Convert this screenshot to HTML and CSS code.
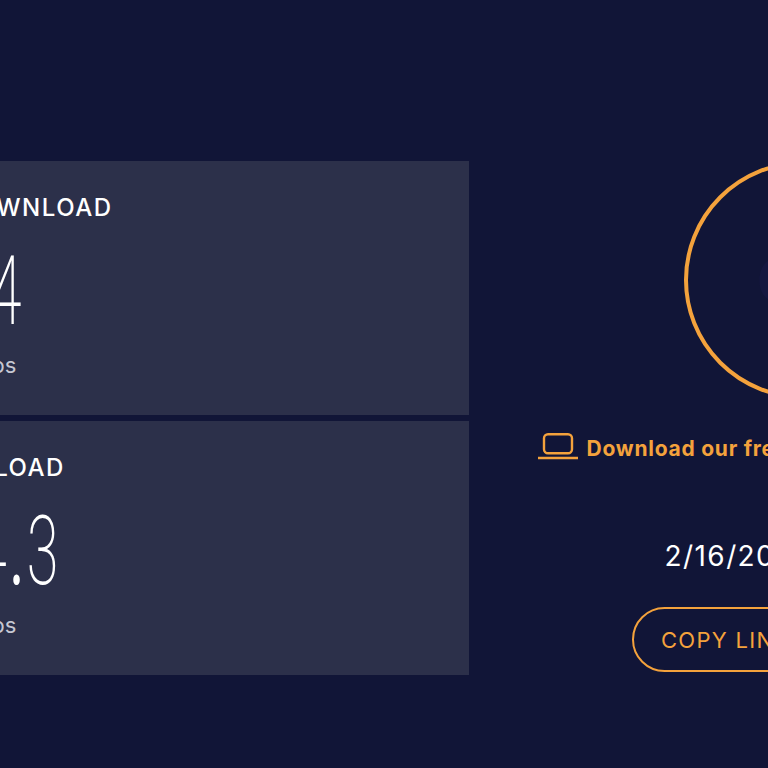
FILE: index.html
```html
<!DOCTYPE html>
<html lang="en">
<head>
<meta charset="utf-8">
<title>Speed test result</title>
<link rel="stylesheet" href="styles.css">
</head>
<body>
<main class="result">
  <section class="stats">
    <article class="card">
      <h2 class="label">DOWNLOAD</h2>
      <div class="value"><span class="digits">94</span></div>
      <div class="unit">Mbps</div>
    </article>
    <article class="card">
      <h2 class="label">UPLOAD</h2>
      <div class="value value-up"><span class="digits">14<span class="dot">.</span>3</span></div>
      <div class="unit">Mbps</div>
    </article>
  </section>
  <section class="side">
    <div class="dial"><span class="dial-text">GO</span></div>
    <a class="promo">
      <svg class="laptop" viewBox="0 0 40 27" aria-hidden="true">
        <rect x="6" y="1.2" width="28" height="19" rx="4"/>
        <path d="M0 25h40"/>
      </svg>
      <span class="promo-text">Download our free desktop and mobile apps</span>
    </a>
    <div class="date">2/16/2021, 9:41 PM</div>
    <button class="copy">COPY LINK TO RESULTS</button>
  </section>
</main>
</body>
</html>
```

FILE: styles.css
```css
html, body {
  margin: 0;
  height: 100%;
  background: #111537;
  overflow: hidden;
}
body {
  font-family: "Inter", "Open Sans", sans-serif;
  color: #fff;
}
.result {
  display: flex;
  width: 1100px;
  margin-left: -60px;
  padding-top: 161px;
}
.stats {
  width: 529px;
  flex: none;
  display: flex;
  flex-direction: column;
  gap: 6px;
}
.card {
  height: 254px;
  background: #2c304a;
  padding: 34px 0 0 18px;
  box-sizing: border-box;
}
.label {
  margin: 0;
  font-size: 24px;
  line-height: 26px;
  font-weight: 500;
  letter-spacing: 1.5px;
  white-space: nowrap;
}
.value {
  margin-top: 30px;
  height: 80px;
  font-family: "Roboto", sans-serif;
  font-weight: 200;
  font-size: 96px;
  line-height: 80px;
}
.value-up {
  margin-left: -17px;
  letter-spacing: 4px;
}
.digits {
  display: inline-block;
  transform: scaleX(0.6);
  transform-origin: left center;
}
.dot {
  font-weight: 400;
}
.unit {
  margin-top: 21px;
  font-size: 22px;
  line-height: 26px;
  color: #c6c7d2;
}
.side {
  flex: none;
  width: 669px;
  margin-left: -1px;
  display: flex;
  flex-direction: column;
  align-items: center;
}
.dial {
  width: 230px;
  height: 230px;
  border: 4px solid #f4a23c;
  border-radius: 50%;
  flex: none;
  display: flex;
  align-items: center;
  justify-content: center;
}
.dial-text {
  font-size: 60px;
  font-weight: 700;
  color: #15173f;
}
.promo {
  display: flex;
  align-items: center;
  gap: 9px;
  margin-top: 32px;
  color: #f4a23c;
  font-weight: 700;
  font-size: 21px;
  letter-spacing: 0.75px;
  white-space: nowrap;
}
.promo-text {
  padding-top: 5px;
}
.laptop {
  width: 40px;
  height: 27px;
  flex: none;
  fill: none;
  stroke: #f4a23c;
  stroke-width: 2.4;
}
.date {
  margin-top: 78px;
  font-size: 28px;
  line-height: 34px;
  letter-spacing: 1.4px;
  white-space: nowrap;
}
.copy {
  margin-top: 34px;
  width: 341px;
  height: 65px;
  flex: none;
  border: 2.5px solid #f4a23c;
  border-radius: 33px;
  background: transparent;
  color: #f4a23c;
  font: 400 22px "Inter", sans-serif;
  letter-spacing: 1.3px;
  white-space: nowrap;
}
```
